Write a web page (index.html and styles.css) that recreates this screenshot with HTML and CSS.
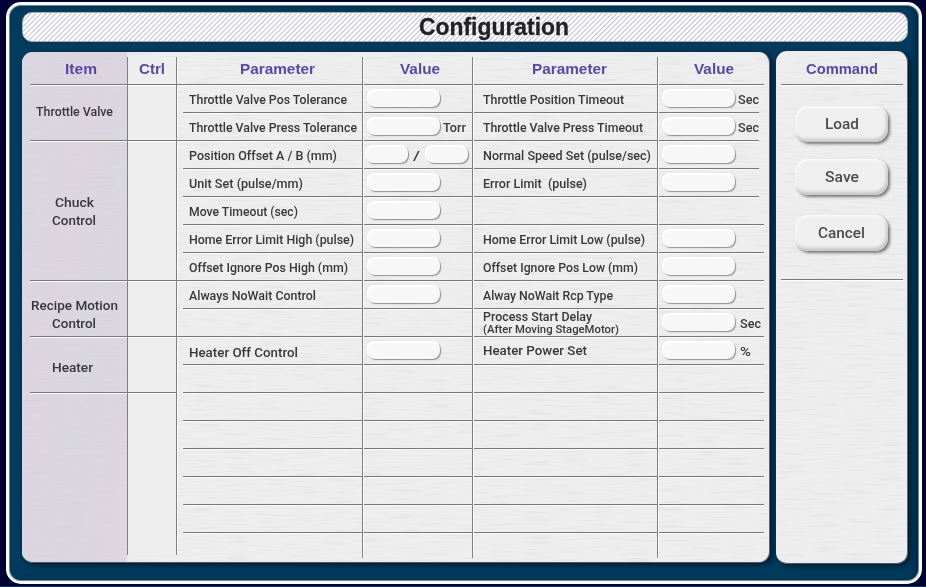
FILE: index.html
```html
<!DOCTYPE html>
<html lang="en">
<head>
<meta charset="utf-8">
<title>Configuration</title>
<link rel="stylesheet" href="styles.css">
</head>
<body>
<main class="frame">
  <header class="title"><h1><span data-fit="149">Configuration</span></h1></header>
  <div class="content">
    <section class="panel table">
      <svg class="texture" aria-hidden="true"><filter id="grain" x="0" y="0" width="100%" height="100%"><feTurbulence type="fractalNoise" baseFrequency="0.03 0.6" numOctaves="2" seed="4"/><feColorMatrix values="0 0 0 0 .6  0 0 0 0 .6  0 0 0 0 .62  .8 0 0 0 -.4"/></filter><rect width="100%" height="100%" filter="url(#grain)"/></svg>
      <div class="items">
        <h2><span data-fit="31">Item</span></h2>
        <div class="group two"><span data-fit="76">Throttle Valve</span></div>
        <div class="group five"><span data-fit="38">Chuck</span><span data-fit="43">Control</span></div>
        <div class="group two lower"><span data-fit="86">Recipe Motion</span><span data-fit="43">Control</span></div>
        <div class="group two heater"><span data-fit="40">Heater</span></div>
      </div>
      <div class="ctrl">
        <h2><span data-fit="25">Ctrl</span></h2>
        <div class="group two"></div><div class="group five"></div><div class="group two"></div><div class="group two"></div>
      </div>
      <div class="params">
        <div class="row head full"><h2 class="cell"><span data-fit="74">Parameter</span></h2><h2 class="cell"><span data-fit="39">Value</span></h2><h2 class="cell"><span data-fit="74">Parameter</span></h2><h2 class="cell"><span data-fit="39">Value</span></h2></div>
      </div>
    </section>
    <aside class="panel command">
      <svg class="texture" aria-hidden="true"><rect width="100%" height="100%" filter="url(#grain)"/></svg>
      <h2><span data-fit="71">Command</span></h2>
      <div class="buttons">
        <button><span data-fit="33">Load</span></button>
        <button><span data-fit="33">Save</span></button>
        <button><span data-fit="46">Cancel</span></button>
      </div>
    </aside>
  </div>
</main>
<script src="script.js"></script>
</body>
</html>
```
FILE: styles.css
```css
* { box-sizing: border-box; }
body { margin: 0; height: 587px; overflow: hidden; padding: 2px 4px 0 6px; background: #000034; border-bottom: 1px solid #003a5c; font: 500 12.4px/18px Roboto, sans-serif; color: #383838; }
h1, h2 { margin: 0; }
.frame { height: 582px; border: 3px solid #fff; border-radius: 15px; background: #003a5c; padding: 7px 11px 0 13px; box-shadow: inset 0 0 0 1px #668ba0, inset -4px 0 5px #002847; }
.title { height: 30px; border-radius: 10px; border: 1px solid #aaa; background: repeating-linear-gradient(135deg, #fff 0 1.5px, #c9c8d9 2.2px 2.5px, #fff 3.54px); display: flex; justify-content: center; }
.title h1 { font: 700 24px/28px "Liberation Sans", sans-serif; color: #222; padding-left: 58px; -webkit-text-stroke: .3px #222; }
[data-fit] { display: inline-block; white-space: pre; transform-origin: left center; }
.content { display: flex; align-items: flex-start; margin-top: 9px; gap: 6px; }
.panel { position: relative; background: #eee; border-radius: 11px; overflow: hidden; border-right: 1px solid #666; border-bottom: 1px solid #555; box-shadow: 3px 2px 5px #001b35; }
.texture { position: absolute; inset: 0; width: 100%; height: 100%; pointer-events: none; }
h2 { font: 700 14.6px/24px "Liberation Sans", sans-serif; color: #5848ac; text-align: center; height: 28px; border-bottom: 1px solid #777; }
.table { width: 749px; height: 511px; margin-top: 1px; padding: 5px 5px 0 0; display: grid; grid-template-columns: 106px 49px 1fr; align-items: start; }
.table::before { content: ""; position: absolute; left: 0; top: 0; width: 105px; height: 100%; background: linear-gradient(100deg, #d9d8df, #ddd5e1 40%, #d9d7df 60%, #dfd5e3); }
.items, .ctrl, .params { position: relative; height: 498px; border-right: 1px solid #808080; box-shadow: 1px 0 #fafafa; }
.items { padding-left: 8px; }
.items h2 { padding-left: 5px; }
.ctrl { background: #eee; }
.items h2, .ctrl h2, .group { box-shadow: 0 1px #fff; }
.group { display: flex; flex-direction: column; align-items: center; justify-content: center; border-bottom: 1px solid #777; padding-right: 9px; }
.two { height: 56px; }
.items .two:nth-child(2) { padding-bottom: 2px; }
.five { height: 140px; padding-top: 2px; }
.lower { padding-top: 13px; }
.heater { padding: 7px 12px 0 0; }
.params { border: 0; box-shadow: none; height: 501px; }
.row { display: grid; grid-template-columns: 180px 110px 185px 1fr; height: 28px; margin-left: 6px; border-bottom: 1px solid #777; box-shadow: 0 1px #fafafa; }
.row.full { margin-left: 0; grid-template-columns: 186px 110px 185px 1fr; }
.row.narrow { margin-right: 5px; }
.row.last { border: 0; box-shadow: none; height: 25px; }
.cell { display: flex; align-items: center; height: 28px; border-right: 1px solid #808080; }
.row.last .cell { height: 25px; }
.cell:last-child { border-right: 0; }
.cell + .cell { box-shadow: inset 1px 0 #fafafa; }
.label { padding: 2px 0 0 6px; }
.full .label:first-child { padding-left: 12px; }
.label:nth-child(3) { padding-left: 10px; }
.label.nudge { padding-top: 3px; }
.label.raise { padding: 0 0 1px 10px; }
.label.stack { flex-direction: column; align-items: flex-start; justify-content: center; line-height: 14px; padding-top: 0; }
.stack small { font-size: 10.4px; line-height: 12px; }
.value { padding: 0 0 2px 4px; gap: 3px; }
.value > [data-fit] { position: relative; top: 2px; }
.far { gap: 5px; }
.field { flex: none; width: 73px; height: 18px; border-radius: 8px; background: #f7f7f7; box-shadow: 1px 1px 1px #8f8f8f, inset 1px 2px 1px #fff; }
.pair { padding-left: 2px; gap: 5px; }
.pair .field { width: 43px; }
.head .cell { justify-content: center; align-items: flex-start; border-bottom: 0; }
.head .cell:first-child { padding-left: 15px; }
.head .cell:nth-child(2) { padding-left: 4px; }
.head .cell:last-child { padding-left: 5px; }
.head .cell:nth-child(3) { padding-left: 8px; }
.command { width: 132px; height: 513px; padding: 6px 4px 0 5px; }
.command h2 { position: relative; box-shadow: 0 1px #fff; }
.buttons { position: relative; height: 195px; border-bottom: 1px solid #777; box-shadow: 0 1px #fff; padding: 21px 15px 0 14px; display: flex; flex-direction: column; }
button { flex: none; width: 93px; height: 36px; margin-bottom: 17px; border: 0; padding: 0; border-radius: 13px; background: #efefef; font: 500 14.3px/20px Roboto, sans-serif; color: #4c4c4c; box-shadow: 2px 2px 3px #777, inset 1px 2px 2px #fafafa, inset -2px -3px 3px #c7c7c7; }
button:nth-child(2) { margin-bottom: 20px; }
```
FILE: script.js
```js
// [left label, width, left unit, right label, width, right unit, row classes]
const rows = [
  ["Throttle Valve Pos Tolerance", 157, "", "Throttle Position Timeout", 140, "Sec", "narrow"],
  ["Throttle Valve Press Tolerance", 167, "Torr", "Throttle Valve Press Timeout", 159, "Sec", "full narrow"],
  ["Position Offset A / B (mm)", 147, "pair", "Normal Speed Set (pulse/sec)", 167, "", "narrow"],
  ["Unit Set (pulse/mm)", 113, "", "Error Limit  (pulse)", 103, "", "narrow"],
  ["Move Timeout (sec)", 108, "", null, 0, null, ""],
  ["Home Error Limit High (pulse)", 164, "", "Home Error Limit Low (pulse)", 161, "", ""],
  ["Offset Ignore Pos High (mm)", 158, "", "Offset Ignore Pos Low (mm)", 154, "", "full"],
  ["Always NoWait Control", 126, "", "Alway NoWait Rcp Type", 129, "", ""],
  [null, 0, null, "Process Start Delay", 108, "Sec", "full"],
  ["Heater Off Control", 108, "", "Heater Power Set", 103, "%", ""]
];
while (rows.length < 17) rows.push([null, 0, null, null, 0, null, rows.length === 16 ? "last" : ""]);
const unitWidth = { Torr: 22, Sec: 20, "%": 10 };
const label = (text, width, extra) => `<div class="cell label ${extra}">${text ? `<span data-fit="${width}">${text}</span>` : ""}${extra === "stack" ? '<small data-fit="135">(After Moving StageMotor)</small>' : ""}</div>`;
const field = '<span class="field"></span>';
function value(unit, extra) {
  if (unit === null) return '<div class="cell"></div>';
  if (unit === "pair") return `<div class="cell value pair">${field}<span data-fit="6">/</span>${field}</div>`;
  return `<div class="cell value ${extra}">${field}${unit ? `<span data-fit="${unitWidth[unit]}">${unit}</span>` : ""}</div>`;
}
document.querySelector(".params").insertAdjacentHTML("beforeend", rows.map(([a, aw, au, b, bw, bu, cls], i) =>
  `<div class="row ${cls}">${label(a, aw, i === 9 ? "nudge" : "")}${value(au, "")}${label(b, bw, i === 8 ? "stack" : i === 9 ? "raise" : "")}${value(bu, i > 7 ? "far" : "")}</div>`).join(""));
// Condense each label to its design width, keeping its layout box in step.
document.querySelectorAll("[data-fit]").forEach(el => {
  const natural = el.getBoundingClientRect().width;
  const target = Number(el.dataset.fit) + 1;
  el.style.transform = `scaleX(${target / natural})`;
  el.style.marginRight = `${target - natural}px`;
});
```
